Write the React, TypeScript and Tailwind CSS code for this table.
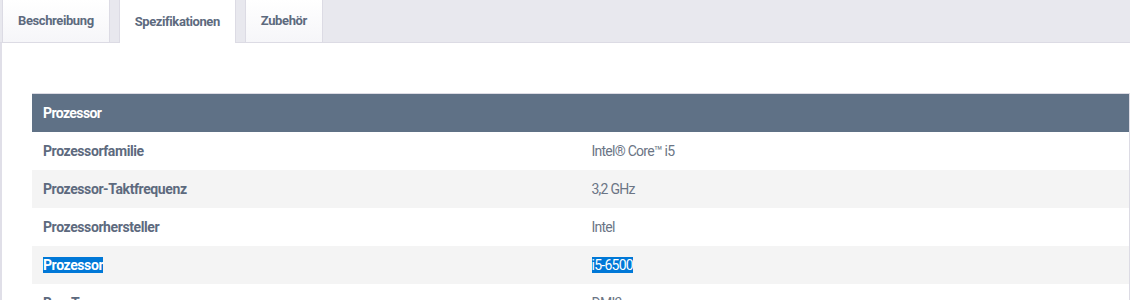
import React from "react";

const tabs = [
  { label: "Beschreibung", active: false },
  { label: "Spezifikationen", active: true },
  { label: "Zubehör", active: false },
];

const rows: { label: string; value: string; selected?: boolean }[] = [
  { label: "Prozessorfamilie", value: "Intel® Core™ i5" },
  { label: "Prozessor-Taktfrequenz", value: "3,2 GHz" },
  { label: "Prozessorhersteller", value: "Intel" },
  { label: "Prozessor", value: "i5-6500", selected: true },
  { label: "Bus-Typ", value: "DMI3" },
];

export default function App() {
  return (
    <div
      className="h-[300px] w-[1130px] overflow-hidden bg-white"
      style={{ fontFamily: "Roboto, 'Liberation Sans', sans-serif" }}
    >
      {/* Tab bar */}
      <div className="flex h-[43px] border-b border-[#dcdbe4] bg-[#e8e8ee] pl-[2px]">
        {tabs.map((t) =>
          t.active ? (
            <div
              key={t.label}
              className="relative z-10 -mb-px ml-[9px] mr-[9px] flex h-[43px] items-center border-x border-[#dcdbe4] bg-white px-[15px] text-[13px] font-bold tracking-[-0.4px] text-[#5d6a7e]"
            >
              {t.label}
            </div>
          ) : (
            <div
              key={t.label}
              className="flex h-[42px] items-center border-x border-[#dcdbe4] bg-gradient-to-b from-white to-[#f6f6f9] px-[15px] text-[13px] font-bold tracking-[-0.4px] text-[#5d6a7e]"
            >
              {t.label}
            </div>
          )
        )}
      </div>

      {/* Panel */}
      <div className="h-[257px] border-l-2 border-[#e0dfe8] pl-[30px] pt-[50px]">
        <div className="border-r border-t border-[#dcdbe4]">
          <div className="flex h-[38px] items-center bg-[#5f7186] px-[11px] text-[14px] font-bold tracking-[-0.6px] text-white">
            Prozessor
          </div>
          {rows.map((r, i) => (
            <div
              key={r.label}
              className={`flex h-[38px] items-center text-[14px] ${i % 2 === 1 ? "bg-[#f4f4f4]" : "bg-white"}`}
            >
              <div className="w-1/2 px-[11px] font-bold tracking-[-0.4px] text-[#5d6a7e]">
                <span className={r.selected ? "bg-[#0078d7] text-white" : ""}>{r.label}</span>
              </div>
              <div className="w-1/2 px-[11px] tracking-[-0.75px] text-[#6b7585]">
                <span className={r.selected ? "bg-[#0078d7] text-white" : ""}>{r.value}</span>
              </div>
            </div>
          ))}
        </div>
      </div>
    </div>
  );
}
